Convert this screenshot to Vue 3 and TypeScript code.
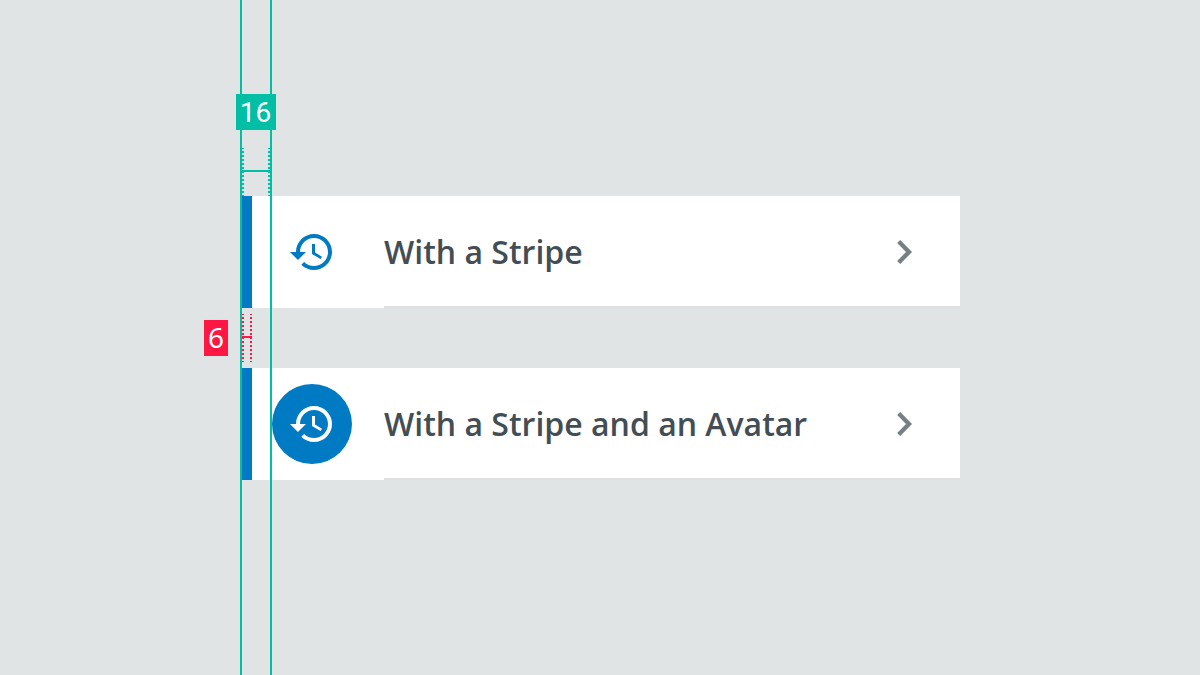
<script setup lang="ts">
interface Item { label: string; avatar: boolean }
const items: Item[] = [
  { label: 'With a Stripe', avatar: false },
  { label: 'With a Stripe and an Avatar', avatar: true },
]
</script>

<template>
  <main class="canvas">
    <section class="list">
      <article v-for="item in items" :key="item.label" class="row">
        <div class="stripe"></div>
        <div class="lead">
          <div class="symbol" :class="{ avatar: item.avatar }">
            <svg width="48" height="48" viewBox="0 0 24 24" fill="currentColor">
              <path d="M13 3c-4.97 0-9 4.03-9 9H1l3.96 4.03L9 12H6c0-3.87 3.13-7 7-7s7 3.13 7 7-3.13 7-7 7c-1.93 0-3.68-.79-4.94-2.06l-1.42 1.42C8.27 19.99 10.51 21 13 21c4.97 0 9-4.03 9-9s-4.03-9-9-9z" />
              <path d="M12 8v5l4.28 2.54.72-1.21-3.5-2.08V8z" />
            </svg>
          </div>
        </div>
        <div class="body">
          <span class="label">{{ item.label }}</span>
          <svg class="chevron" width="48" height="48" viewBox="0 0 24 24" fill="none">
            <path d="M9.35 6.8L14.5 12l-5.15 5.2" stroke="currentColor" stroke-width="2.15" />
          </svg>
        </div>
      </article>
    </section>

    <i class="guide guide-a"></i>
    <i class="guide guide-b"></i>
    <div class="span wide"></div>
    <div class="span narrow"></div>
    <span class="tag tag-wide">16</span>
    <span class="tag tag-narrow">6</span>
  </main>
</template>

<style>
body { margin: 0; }
</style>

<style scoped>
.canvas {
  position: relative;
  box-sizing: border-box;
  width: 1200px;
  height: 675px;
  padding: 196px 240px 0;
  overflow: hidden;
  background: #e0e4e5;
  font-family: "Open Sans", sans-serif;
}
.list { display: flex; flex-direction: column; gap: 60px; }
.row { display: flex; height: 112px; }
.stripe { width: 12px; background: #007ac3; }
.lead {
  display: flex;
  align-items: center;
  box-sizing: border-box;
  width: 132px;
  padding-left: 20px;
  background: #fff;
}
.symbol {
  display: flex;
  align-items: center;
  justify-content: center;
  width: 80px;
  height: 80px;
  border-radius: 50%;
  color: #007ac3;
}
.avatar { background: #007ac3; color: #fff; }
.body {
  flex: 1;
  display: flex;
  align-items: center;
  justify-content: space-between;
  box-sizing: border-box;
  padding: 2px 32px 0 0;
  background: #fff;
  border-bottom: 2px solid #dddfe0;
}
.label { font-size: 32px; font-weight: 600; line-height: 44px; color: #434e54; white-space: nowrap; }
.chevron { color: #757f86; }
.guide { position: absolute; top: 0; width: 2px; height: 675px; background: #00bfa5; }
.guide-a { left: 240px; }
.guide-b { left: 270px; }
.span {
  position: absolute;
  height: 48px;
  --dots: repeating-linear-gradient(to bottom, var(--c) 0 1px, transparent 1px 3px, var(--c) 3px 4px);
  background:
    var(--dots) left top / 2px 100% no-repeat,
    var(--dots) right top / 2px 100% no-repeat,
    linear-gradient(var(--c), var(--c)) left 22px / 100% 2px no-repeat;
}
.wide { --c: #00bfa5; left: 242px; top: 148px; width: 28px; }
.narrow { --c: #ff1744; left: 242px; top: 314px; width: 10px; }
.tag {
  position: absolute;
  box-sizing: border-box;
  height: 36px;
  padding-top: 1px;
  line-height: 36px;
  text-align: center;
  color: #fff;
  font-size: 28px;
}
.tag-wide { left: 236px; top: 94px; width: 40px; padding-right: 1px; background: #00bfa5; font-family: Roboto, sans-serif; }
.tag-narrow { left: 204px; top: 320px; width: 24px; padding-top: 0; line-height: 35px; background: #ff1744; font-family: "Noto Sans", sans-serif; }
</style>
